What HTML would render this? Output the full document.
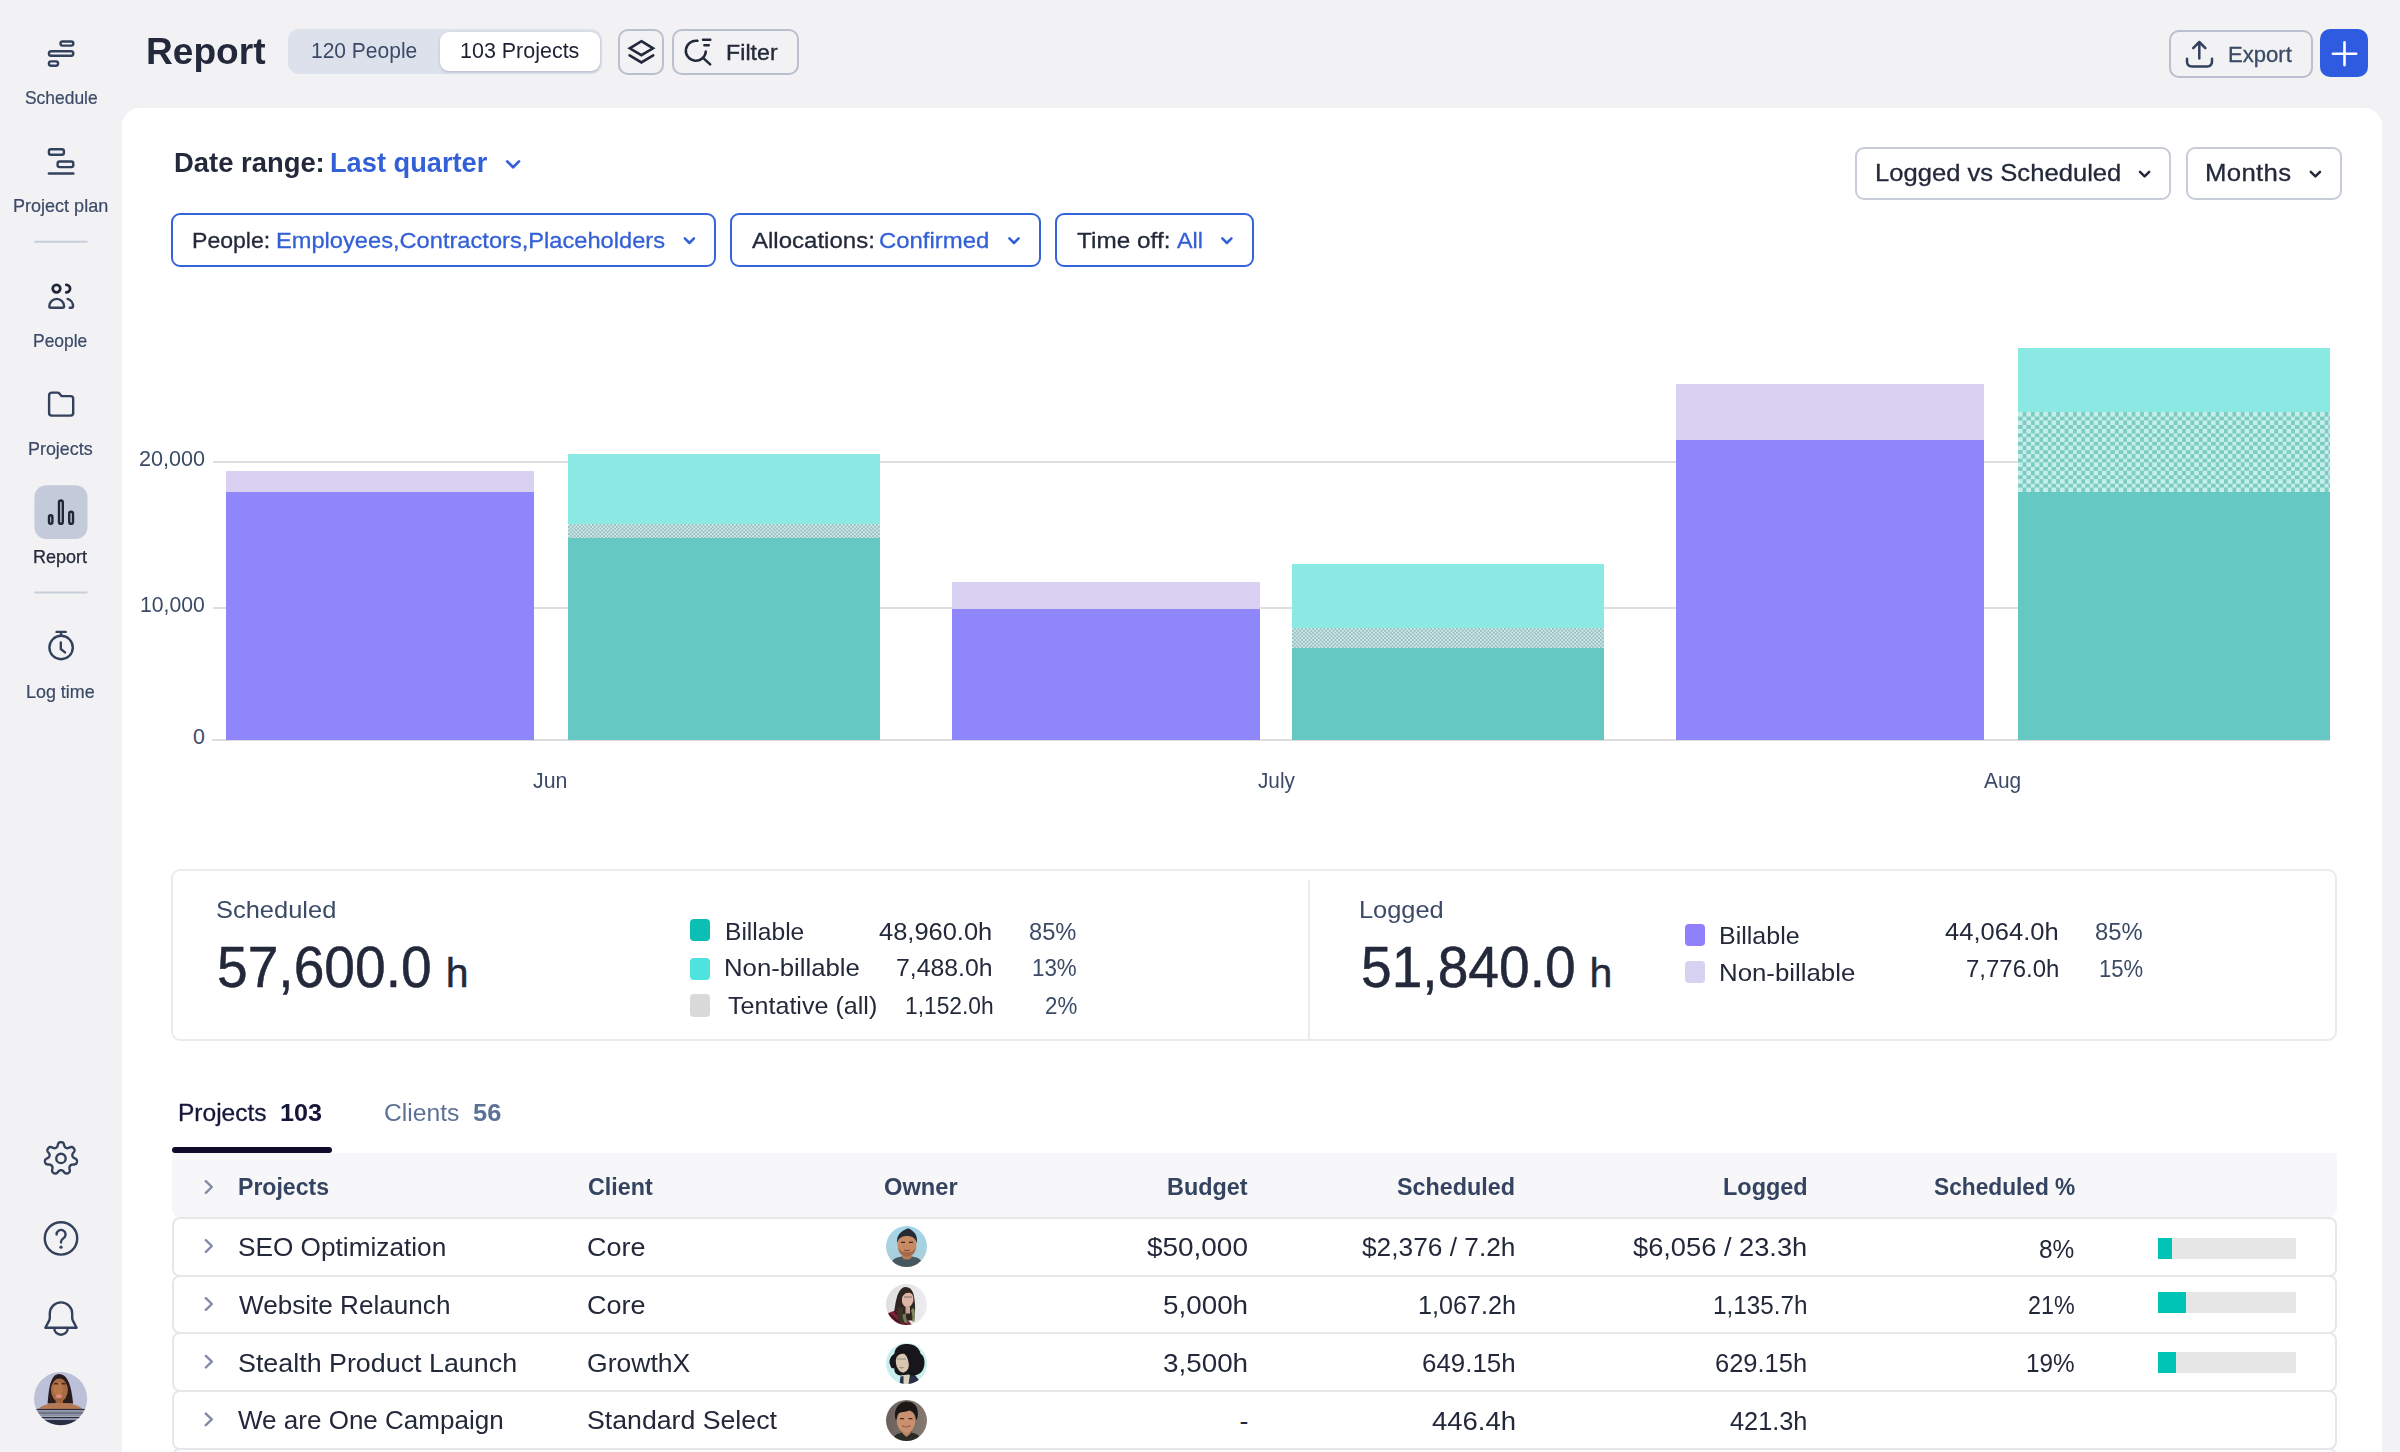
<!DOCTYPE html>
<html><head><meta charset="utf-8"><title>Report</title>
<style>
*{box-sizing:border-box;margin:0;padding:0}
html,body{width:2400px;height:1452px;overflow:hidden;background:#f2f2f5;font-family:"Liberation Sans",sans-serif}
body{position:relative}
.a{position:absolute}
.t{position:absolute;white-space:nowrap;display:block}
svg{position:absolute;overflow:visible}

</style></head>
<body>
<!-- panel -->
<div class="a" style="left:122px;top:108px;width:2260px;height:1400px;background:#fff;border-radius:18px 18px 0 0"></div>
<!-- sidebar icons -->
<svg width="122" height="1452" viewBox="0 0 122 1452" style="left:0;top:0" fill="none" stroke="#33415c" stroke-width="2.4" stroke-linecap="round" stroke-linejoin="round">
<rect x="60.5" y="41.5" width="12.8" height="4.1" rx="2.05"/>
<rect x="48.9" y="51.2" width="24.4" height="4.6" rx="2.3"/>
<rect x="48.9" y="61.4" width="9.2" height="4.4" rx="2.2"/>
<rect x="48.9" y="149.2" width="15" height="5.6" rx="2"/>
<rect x="57.6" y="161.5" width="15.7" height="5.6" rx="2"/>
<path d="M48.9 173.5H73.3"/>
<path d="M34.4 241.7H87.5M34.4 592.6H87.5" stroke="#c9cedb" stroke-width="2" stroke-linecap="butt"/>
<g stroke="#1f2637" stroke-width="2.7"><circle cx="56.5" cy="288.6" r="3.8"/><path d="M66.3 284.8a3.8 3.8 0 0 1 0 7.6"/></g>
<path d="M49.3 306.3a7.4 7.4 0 0 1 14.8 0q0 1.5-1.5 1.5h-11.8q-1.5 0-1.5-1.5z"/>
<path d="M67.6 298.9a7.4 7.4 0 0 1 5.4 7.4q0 1.5-1.6 1.5h-1.6"/>
<path d="M49.1 395.2a2.6 2.6 0 0 1 2.6-2.6h5.8q1.2 0 1.9 0.9l2 2.6h9.2a2.6 2.6 0 0 1 2.6 2.6v14.3a2.6 2.6 0 0 1-2.6 2.6h-18.9a2.6 2.6 0 0 1-2.6-2.6z"/>
<rect x="34.4" y="485.2" width="53.1" height="53.7" rx="12" fill="#c3cad9" stroke="none"/>
<g stroke="#1f2637"><rect x="49" y="515.2" width="3.4" height="8.6" rx="1.7"/><rect x="59" y="500.5" width="3.8" height="23.3" rx="1.9"/><rect x="69.2" y="511.7" width="3.8" height="12.1" rx="1.9"/></g>
<circle cx="61.1" cy="647.5" r="11.7"/><path d="M56.6 631.9H65.7M61.1 632v3.6M60.8 642.5v6.5l4.2 3.4"/>
<path d="M75.02 1158.45 L75.59 1158.78 L76.08 1159.13 L76.46 1159.49 L76.71 1159.87 L76.87 1160.24 L76.96 1160.62 L76.99 1160.99 L76.97 1161.35 L76.93 1161.72 L76.86 1162.08 L76.77 1162.43 L76.65 1162.78 L76.50 1163.11 L76.31 1163.44 L76.08 1163.74 L75.77 1164.00 L75.38 1164.23 L74.88 1164.39 L74.28 1164.50 L73.63 1164.55 L72.98 1164.57 L72.39 1164.60 L71.91 1164.66 L71.52 1164.75 L71.21 1164.89 L70.96 1165.04 L70.74 1165.22 L70.54 1165.41 L70.37 1165.60 L70.20 1165.81 L70.03 1166.02 L69.88 1166.24 L69.74 1166.47 L69.62 1166.72 L69.52 1167.00 L69.46 1167.33 L69.46 1167.73 L69.51 1168.22 L69.61 1168.80 L69.73 1169.43 L69.83 1170.08 L69.86 1170.69 L69.81 1171.21 L69.68 1171.64 L69.48 1172.00 L69.24 1172.30 L68.97 1172.55 L68.68 1172.77 L68.37 1172.97 L68.04 1173.14 L67.71 1173.28 L67.36 1173.41 L67.01 1173.50 L66.64 1173.55 L66.26 1173.56 L65.85 1173.48 L65.43 1173.32 L64.99 1173.03 L64.54 1172.63 L64.10 1172.15 L63.67 1171.65 L63.29 1171.22 L62.94 1170.87 L62.62 1170.63 L62.32 1170.47 L62.04 1170.37 L61.77 1170.31 L61.50 1170.27 L61.23 1170.26 L60.97 1170.25 L60.71 1170.26 L60.44 1170.27 L60.17 1170.31 L59.90 1170.37 L59.62 1170.47 L59.32 1170.63 L59.00 1170.87 L58.65 1171.22 L58.27 1171.65 L57.84 1172.15 L57.40 1172.63 L56.95 1173.03 L56.51 1173.32 L56.09 1173.48 L55.68 1173.56 L55.30 1173.55 L54.93 1173.50 L54.58 1173.41 L54.23 1173.28 L53.90 1173.14 L53.57 1172.97 L53.26 1172.77 L52.97 1172.55 L52.70 1172.30 L52.46 1172.00 L52.26 1171.64 L52.13 1171.21 L52.08 1170.69 L52.11 1170.08 L52.21 1169.43 L52.33 1168.80 L52.43 1168.22 L52.48 1167.73 L52.48 1167.33 L52.42 1167.00 L52.32 1166.72 L52.20 1166.47 L52.06 1166.24 L51.91 1166.02 L51.74 1165.81 L51.57 1165.60 L51.40 1165.41 L51.20 1165.22 L50.98 1165.04 L50.73 1164.89 L50.42 1164.75 L50.03 1164.66 L49.55 1164.60 L48.96 1164.57 L48.31 1164.55 L47.66 1164.50 L47.06 1164.39 L46.56 1164.23 L46.17 1164.00 L45.86 1163.74 L45.63 1163.44 L45.44 1163.11 L45.29 1162.78 L45.17 1162.43 L45.08 1162.08 L45.01 1161.72 L44.97 1161.35 L44.95 1160.99 L44.98 1160.62 L45.07 1160.24 L45.23 1159.87 L45.48 1159.49 L45.86 1159.13 L46.35 1158.78 L46.92 1158.45 L47.50 1158.15 L48.01 1157.87 L48.42 1157.60 L48.73 1157.35 L48.95 1157.10 L49.11 1156.84 L49.23 1156.59 L49.32 1156.34 L49.40 1156.08 L49.47 1155.82 L49.52 1155.56 L49.56 1155.30 L49.59 1155.03 L49.59 1154.75 L49.55 1154.45 L49.46 1154.13 L49.30 1153.77 L49.04 1153.35 L48.70 1152.88 L48.31 1152.35 L47.94 1151.81 L47.65 1151.28 L47.47 1150.79 L47.40 1150.34 L47.42 1149.94 L47.51 1149.56 L47.64 1149.22 L47.81 1148.89 L48.01 1148.58 L48.23 1148.29 L48.46 1148.01 L48.72 1147.75 L49.00 1147.51 L49.31 1147.30 L49.65 1147.13 L50.05 1147.02 L50.50 1146.99 L51.02 1147.06 L51.60 1147.22 L52.21 1147.47 L52.81 1147.73 L53.34 1147.95 L53.81 1148.11 L54.20 1148.19 L54.53 1148.21 L54.83 1148.18 L55.10 1148.11 L55.36 1148.03 L55.61 1147.93 L55.85 1147.82 L56.09 1147.70 L56.32 1147.57 L56.55 1147.42 L56.76 1147.25 L56.97 1147.03 L57.17 1146.76 L57.35 1146.40 L57.52 1145.94 L57.68 1145.38 L57.84 1144.75 L58.04 1144.12 L58.27 1143.57 L58.54 1143.12 L58.85 1142.78 L59.18 1142.55 L59.52 1142.38 L59.88 1142.27 L60.24 1142.20 L60.60 1142.16 L60.97 1142.15 L61.34 1142.16 L61.70 1142.20 L62.06 1142.27 L62.42 1142.38 L62.76 1142.55 L63.09 1142.78 L63.40 1143.12 L63.67 1143.57 L63.90 1144.12 L64.10 1144.75 L64.26 1145.38 L64.42 1145.94 L64.59 1146.40 L64.77 1146.76 L64.97 1147.03 L65.18 1147.25 L65.39 1147.42 L65.62 1147.57 L65.85 1147.70 L66.09 1147.82 L66.33 1147.93 L66.58 1148.03 L66.84 1148.11 L67.11 1148.18 L67.41 1148.21 L67.74 1148.19 L68.13 1148.11 L68.60 1147.95 L69.13 1147.73 L69.73 1147.47 L70.34 1147.22 L70.92 1147.06 L71.44 1146.99 L71.89 1147.02 L72.29 1147.13 L72.63 1147.30 L72.94 1147.51 L73.22 1147.75 L73.48 1148.01 L73.71 1148.29 L73.93 1148.58 L74.13 1148.89 L74.30 1149.22 L74.43 1149.56 L74.52 1149.94 L74.54 1150.34 L74.47 1150.79 L74.29 1151.28 L74.00 1151.81 L73.63 1152.35 L73.24 1152.88 L72.90 1153.35 L72.64 1153.77 L72.48 1154.13 L72.39 1154.45 L72.35 1154.75 L72.35 1155.03 L72.38 1155.30 L72.42 1155.56 L72.47 1155.82 L72.54 1156.08 L72.62 1156.34 L72.71 1156.59 L72.83 1156.84 L72.99 1157.10 L73.21 1157.35 L73.52 1157.60 L73.93 1157.87 L74.44 1158.15Z"/><circle cx="60.97" cy="1158.45" r="4.7"/>
<circle cx="61" cy="1238.400" r="16.200"/><path d="M56.600 1234.400a4.500 4.500 0 1 1 6.900 3.800c-1.700 1-2.500 1.900-2.500 3.600v0.600"/><circle cx="61" cy="1247.200" r="1.600" fill="#33415c" stroke="none"/>
<path d="M45.4 1327.8l3.6-6.9q0.8-1.500 0.800-3.200v-4.100a11.200 11.200 0 0 1 22.400 0v4.100q0 1.700 0.800 3.200l3.600 6.900z"/><path d="M54.3 1328.600a6.700 6.200 0 0 0 13.400 0"/>
</svg>

<!-- header -->
<div class="a" style="left:287.6px;top:28.8px;width:314px;height:45.5px;background:#dde1eb;border-radius:11px"></div>
<div class="a" style="left:440.3px;top:32px;width:159.5px;height:39px;background:#fff;border-radius:9px;box-shadow:0 1px 3px rgba(30,40,80,.22)"></div>
<div class="a" style="left:618.2px;top:29.2px;width:46.2px;height:45.8px;border:2px solid #b9bfce;border-radius:10px"></div>
<div class="a" style="left:671.5px;top:29.2px;width:127px;height:45.8px;border:2px solid #b9bfce;border-radius:10px"></div>
<div class="a" style="left:2169.2px;top:30.2px;width:143.9px;height:47.7px;border:2px solid #b9bfce;border-radius:10px"></div>
<div class="a" style="left:2320px;top:28.8px;width:48px;height:48.2px;background:#2f5be0;border-radius:10px"></div>
<svg width="2400" height="110" viewBox="0 0 2400 110" style="left:0;top:0" fill="none" stroke-linecap="round" stroke-linejoin="round">
<g stroke="#23293a" stroke-width="2.6" stroke-linejoin="miter">
<path d="M641.4 41.2L653 48.3L641.4 55.2L629.8 48.3Z"/><path d="M629.6 55.4L641.4 62.4L653.2 55.4"/>
</g>
<g stroke="#23293a" stroke-width="2.5">
<path d="M697.5 40.85A10 10 0 1 0 705.8 51.6"/><path d="M703.6 58.4L710.2 64.4M703 39.7H710.3M704.4 45.2H708.8"/>
</g>
<g stroke="#33415c" stroke-width="2.5">
<path d="M2199.3 58.6V42.2M2193.2 48.2L2199.3 42L2205.4 48.2"/><path d="M2187 58.8V61.6Q2187 66.5 2191.9 66.5H2207.1Q2212 66.5 2212 61.6V58.8"/>
</g>
<path d="M2332.9 53.7H2356.2M2344.5 42.2V65.1" stroke="#fff" stroke-width="2.6"/>
</svg>
<!-- panel top controls -->
<div class="a" style="left:1855px;top:146.8px;width:316px;height:53.2px;border:2px solid #c8ccd9;border-radius:9px"></div>
<div class="a" style="left:2185.5px;top:146.8px;width:156.5px;height:53.2px;border:2px solid #c8ccd9;border-radius:9px"></div>
<div class="a" style="left:171.3px;top:213.4px;width:544.6px;height:53.2px;border:2px solid #3563d9;border-radius:9px"></div>
<div class="a" style="left:730px;top:213.4px;width:310.8px;height:53.2px;border:2px solid #3563d9;border-radius:9px"></div>
<div class="a" style="left:1054.6px;top:213.4px;width:199.3px;height:53.2px;border:2px solid #3563d9;border-radius:9px"></div>
<svg width="2400" height="180" viewBox="0 120 2400 180" style="left:0;top:120px" fill="none" stroke-linecap="round" stroke-linejoin="round" stroke-width="2.5">
<g stroke="#3360d6">
<path d="M507.2 161.4l5.9 5.9l5.9-5.9" stroke-width="2.7"/>
<path d="M684.8 238.4l4.6 4.6l4.6-4.6"/><path d="M1009.4 238.4l4.6 4.6l4.6-4.6"/><path d="M1222.3 238.4l4.6 4.6l4.6-4.6"/>
</g>
<g stroke="#23293a"><path d="M2140 171.8l4.6 4.6l4.6-4.6"/><path d="M2310.8 171.8l4.6 4.6l4.6-4.6"/></g>
</svg>

<!-- chart -->
<div class="a" style="left:212.5px;top:461.2px;width:2117.5px;height:1.7px;background:#dedee2"></div>
<div class="a" style="left:212.5px;top:607.1px;width:2117.5px;height:1.7px;background:#dedee2"></div>
<div class="a" style="left:212px;top:739.1px;width:2118px;height:1.8px;background:#dcdce1"></div>
<div class="a" style="left:226px;top:471px;width:308px;height:21px;background:#d8d1f2"></div>
<div class="a" style="left:226px;top:492px;width:308px;height:248px;background:#8f86fb"></div>
<div class="a" style="left:568px;top:454px;width:312px;height:70px;background:#8be9e3"></div>
<div class="a" style="left:568px;top:524px;width:312px;height:14px;background:conic-gradient(#9db8bc 25%,#c9f0ee 0 50%,#9db8bc 0 75%,#c9f0ee 0) 0 0/3.7px 3.7px"></div>
<div class="a" style="left:568px;top:538px;width:312px;height:202px;background:#65c8c2"></div>
<div class="a" style="left:952px;top:582px;width:308px;height:27px;background:#d8d1f2"></div>
<div class="a" style="left:952px;top:609px;width:308px;height:131px;background:#8f86fb"></div>
<div class="a" style="left:1292px;top:564px;width:312px;height:64px;background:#8be9e3"></div>
<div class="a" style="left:1292px;top:628px;width:312px;height:20px;background:conic-gradient(#9db8bc 25%,#c9f0ee 0 50%,#9db8bc 0 75%,#c9f0ee 0) 0 0/3.7px 3.7px"></div>
<div class="a" style="left:1292px;top:648px;width:312px;height:92px;background:#65c8c2"></div>
<div class="a" style="left:1676px;top:384px;width:307.5px;height:56px;background:#d8d1f2"></div>
<div class="a" style="left:1676px;top:440px;width:307.5px;height:300px;background:#8f86fb"></div>
<div class="a" style="left:2018px;top:348px;width:312px;height:64px;background:#8be9e3"></div>
<div class="a" style="left:2018px;top:412px;width:312px;height:80px;background:conic-gradient(#7ecbc1 25%,#c4efeb 0 50%,#7ecbc1 0 75%,#c4efeb 0) 0 0/8.4px 8.4px"></div>
<div class="a" style="left:2018px;top:492px;width:312px;height:248px;background:#65c8c2"></div>

<!-- summary -->
<div class="a" style="left:171px;top:869px;width:2166px;height:172px;border:2px solid #ebebee;border-radius:9px"></div>
<div class="a" style="left:1308.3px;top:880px;width:2px;height:160px;background:#ebebee"></div>
<div class="a" style="left:689.7px;top:918.6px;width:20.5px;height:22.8px;border-radius:4px;background:#0bbfb5"></div>
<div class="a" style="left:689.7px;top:957.8px;width:20.5px;height:22.6px;border-radius:4px;background:#4ee3dc"></div>
<div class="a" style="left:689.7px;top:994.2px;width:20.5px;height:22.7px;border-radius:4px;background:#d9d9d9"></div>
<div class="a" style="left:1685px;top:924.4px;width:20.2px;height:21.6px;border-radius:4px;background:#9180fb"></div>
<div class="a" style="left:1685px;top:961.4px;width:20.2px;height:21.6px;border-radius:4px;background:#d8d1f2"></div>
<!-- tabs & table -->
<div class="a" style="left:171.6px;top:1147.3px;width:160.4px;height:5.5px;background:#0d0a2b;border-radius:3px"></div>
<div class="a" style="left:172px;top:1153px;width:2165px;height:65px;background:#f7f7fa;border-radius:3px 3px 9px 9px"></div>
<div class="a" style="left:172px;top:1217px;width:2165px;height:59.5px;border:2px solid #e7e7ea;border-radius:8px;background:#fff"></div>
<div class="a" style="left:172px;top:1274.7px;width:2165px;height:59.5px;border:2px solid #e7e7ea;border-radius:8px;background:#fff"></div>
<div class="a" style="left:172px;top:1332.4px;width:2165px;height:59.5px;border:2px solid #e7e7ea;border-radius:8px;background:#fff"></div>
<div class="a" style="left:172px;top:1390.1px;width:2165px;height:59.5px;border:2px solid #e7e7ea;border-radius:8px;background:#fff"></div>
<div class="a" style="left:172px;top:1447.8px;width:2165px;height:59.5px;border:2px solid #e7e7ea;border-radius:8px;background:#fff"></div>
<svg width="60" height="300" viewBox="180 1160 60 300" style="left:180px;top:1160px" fill="none" stroke="#828aa6" stroke-width="2.4" stroke-linecap="round" stroke-linejoin="round"><path d="M205.8 1181.2l6 5.8l-6 5.8M205.8 1240.2l6 5.8l-6 5.8M205.8 1298.2l6 5.8l-6 5.8M205.8 1355.9l6 5.8l-6 5.8M205.8 1413.6l6 5.8l-6 5.8"/></svg>
<div class="a" style="left:2158px;top:1238px;width:138px;height:20.7px;background:#e6e6e7"></div>
<div class="a" style="left:2158px;top:1238px;width:14px;height:20.7px;background:#00c5b6"></div>
<div class="a" style="left:2158px;top:1292px;width:138px;height:20.7px;background:#e6e6e7"></div>
<div class="a" style="left:2158px;top:1292px;width:28px;height:20.7px;background:#00c5b6"></div>
<div class="a" style="left:2158px;top:1352px;width:138px;height:20.7px;background:#e6e6e7"></div>
<div class="a" style="left:2158px;top:1352px;width:18px;height:20.7px;background:#00c5b6"></div>

<!-- avatars -->
<svg width="53.2" height="53.2" viewBox="-26.6 -26.6 53.2 53.2" style="left:34.4px;top:1372px"><defs><filter id="bl" x="-10%" y="-10%" width="120%" height="120%"><feGaussianBlur stdDeviation="0.55"/></filter><clipPath id="cs"><circle cx="0" cy="0" r="26.6"/></clipPath></defs><g clip-path="url(#cs)"><g filter="url(#bl)"><rect x="-27" y="-27" width="54" height="54" fill="#bcc0d8"/>
<path d="M-13 5C-12-8-10.500-24.500-1.500-24.500C8-24.500 11-10 12.500 5Z" fill="#2a1b1d"/>
<ellipse cx="-1.200" cy="-8.500" rx="8.500" ry="11.500" fill="#a86a42"/>
<ellipse cx="-2.500" cy="-10" rx="5" ry="7" fill="#bd7d4e" opacity=".7"/>
<path d="M-6.500-14.500q2-1.200 4 0M1-14.500q2-1.200 4 0" stroke="#4a2a1c" stroke-width="1.300" fill="none"/>
<ellipse cx="-1.600" cy="-2.400" rx="3.200" ry="1.900" fill="#e58680"/>
<path d="M-5 0h7.500v8h-7.500z" fill="#9c6240"/>
<path d="M-23 12C-20 6-10 4.500-1 4.500C9 4.500 19 6 23 12V14H-23Z" fill="#b57a55"/>
<rect x="-27" y="10.300" width="54" height="20" fill="#2c2d44"/>
<rect x="-27" y="11.400" width="54" height="5.800" fill="#8f95a6"/>
<rect x="-27" y="13.800" width="54" height="1.300" fill="#5d6478"/>
<rect x="-27" y="19.600" width="54" height="1.800" fill="#9aa0b4"/>
<rect x="-27" y="17.200" width="54" height="1" fill="#c5c9d3"/></g></g></svg>
<svg width="41" height="41" viewBox="-20.5 -20.5 41 41" style="left:886.1px;top:1226.1px"><defs><clipPath id="c1"><circle cx="0" cy="0" r="20.5"/></clipPath></defs><g clip-path="url(#c1)"><g filter="url(#bl)"><defs><linearGradient id="g1" x1="0" y1="0" x2="0" y2="1"><stop offset="0" stop-color="#a6d6e9"/><stop offset="1" stop-color="#a9cdd6"/></linearGradient></defs>
<rect x="-21" y="-21" width="42" height="42" fill="url(#g1)"/>
<path d="M-17 21C-16 12-9 10.500-4 10H5C10 10.500 16 12 17 21Z" fill="#47595e"/>
<path d="M-4 6h9v5.500q-4.500 3-9 0z" fill="#b97b58"/>
<ellipse cx="0.500" cy="-1.500" rx="9.500" ry="11.200" fill="#c88a64"/>
<path d="M-8.500 1C-8 8-3 10 0.500 10C4 10 9 8 9.500 1C7 5 4 5.500 0.500 5.500C-3 5.500-6 5-8.500 1Z" fill="#9a5f45" opacity=".75"/>
<path d="M-9.300-3C-10.500-11-6-15 1.500-18.200C8-15.500 11.500-11 10.300-3C9.500-8 6-10.500 0.500-10.500C-5-10.500-8.500-8-9.300-3Z" fill="#272a33"/>
<path d="M-5.500-4.200h4M2.500-4.200h4" stroke="#3a2a22" stroke-width="1.300"/>
<path d="M-2.500 3.500q3 1.300 6 0" stroke="#7a3f30" stroke-width="1" fill="none"/></g></g></svg>
<svg width="41" height="41" viewBox="-20.5 -20.5 41 41" style="left:886.1px;top:1283.9px"><defs><clipPath id="c2"><circle cx="0" cy="0" r="20.5"/></clipPath></defs><g clip-path="url(#c2)"><g filter="url(#bl)"><defs><linearGradient id="g2" x1="0" y1="0" x2="1" y2="0"><stop offset="0" stop-color="#dedede"/><stop offset="1" stop-color="#ececf1"/></linearGradient></defs>
<rect x="-21" y="-21" width="42" height="42" fill="url(#g2)"/>
<path d="M-13 12C-11 0-10-17-1-17.500C7-17.500 8-8 8.500 0C9 6 8 12 7 16H-13Z" fill="#2e2521"/>
<ellipse cx="1.200" cy="-5" rx="5.800" ry="7.600" fill="#dcb6a6" transform="rotate(8 1.200 -5)"/>
<path d="M-4-11C-2-15 4-15.500 6.500-10C3-12.500-1-12.500-4-8Z" fill="#2e2521"/>
<path d="M-2.500-7.500h8" stroke="#6a5a58" stroke-width=".8"/>
<path d="M-1 2h4.500v7h-4.500z" fill="#c9a494"/>
<path d="M4.500 6C5.500 9 6.500 12 5.500 17H8C9 11 8.500 6 7 3Z" fill="#7f8c5c"/>
<path d="M-20 10C-15 6-10 5.500-6 7L6 21H-20Z" fill="#7d2234"/>
<path d="M-18 9l14 12M-12 6.500l12 14" stroke="#3b1620" stroke-width="1.800"/>
<path d="M-9 3C-10 9-9 14-7 18L-2 17C-4 12-4 7-3 3Z" fill="#3a302a"/>
<path d="M-4 10C-4 13-3 16-1.500 19L1 18C-0.500 14-0.500 12-0.500 9Z" fill="#6f7a50"/></g></g></svg>
<svg width="41" height="41" viewBox="-20.5 -20.5 41 41" style="left:886.1px;top:1342.7px"><defs><clipPath id="c3"><circle cx="0" cy="0" r="20.5"/></clipPath></defs><g clip-path="url(#c3)"><g filter="url(#bl)"><rect x="-21" y="-21" width="42" height="42" fill="#c8efef"/>
<path d="M-7 21L-6 13L8 11L16 21Z" fill="#2a2f48"/>
<path d="M-3 8L4 7L2 21H-3Z" fill="#d8d3b8"/>
<path d="M-16 2C-19-3-15-8-12-10C-12-16-6-20 0-19.500C7-20 13-16 14-10C19-7 19 2 16 7C13 12 6 13 2 11L-6 12C-10 12-13 8-12 5C-15 5-16 4-16 2Z" fill="#18181c"/>
<ellipse cx="-4" cy="-1" rx="6.600" ry="10" fill="#d9c6b1" transform="rotate(-8 -4 -1)"/>
<path d="M-10-9C-7-14-1-14 3-10C4-5 4 0 2.500 4C2.500-2 1-7-2-9.500C-5-10-8-9.500-10-6Z" fill="#18181c"/>
<path d="M-9.500-4.500h9" stroke="#7f8a8a" stroke-width=".9"/>
<path d="M-7 4q2 .8 4 0" stroke="#8a6a5c" stroke-width=".9" fill="none"/></g></g></svg>
<svg width="41" height="41" viewBox="-20.5 -20.5 41 41" style="left:886.1px;top:1399.8px"><defs><clipPath id="c4"><circle cx="0" cy="0" r="20.5"/></clipPath></defs><g clip-path="url(#c4)"><g filter="url(#bl)"><defs><linearGradient id="g4" x1="0" y1="0" x2="1" y2="0"><stop offset="0" stop-color="#6a615b"/><stop offset="1" stop-color="#857a70"/></linearGradient></defs>
<rect x="-21" y="-21" width="42" height="42" fill="url(#g4)"/>
<path d="M-15 21C-13 14-8 12.500-3 12H4C9 12.500 13 14 15 21Z" fill="#2b2927"/>
<path d="M-4 8h8v5l-4 3.500l-4-3.500z" fill="#b98264"/>
<ellipse cx="-0.500" cy="0.500" rx="9.300" ry="11.500" fill="#c9916f"/>
<path d="M-10.500 0C-14-10-8-19 0-19C8-19 13-13 11-3C10-1 9.500 0 9.500 0C9.500-6 7-9 3-10C-1-8-6-9-8-7C-9.500-5-9.500-2-10.500 0Z" fill="#1a1918"/>
<path d="M-6.500-1.500q2-1 4 0M2-1.500q2-1 4 0" stroke="#2a1a14" stroke-width="1.200" fill="none"/>
<path d="M-4.500 5.500q4 3 8.500 0q-4.200 1-8.500 0z" fill="#f1e4dc" stroke="#8a4a3a" stroke-width=".7"/></g></g></svg>


<div id="texts">
<span class="t" style="left:24.75px;top:90.00px;font-size:17.8px;line-height:17.8px;color:#3b4a66;transform:scaleX(0.9797);transform-origin:0 0;-webkit-text-stroke:0.2px #3b4a66;">Schedule</span>
<span class="t" style="left:13.49px;top:198.00px;font-size:17.8px;line-height:17.8px;color:#3b4a66;transform:scaleX(1.0140);transform-origin:0 0;-webkit-text-stroke:0.2px #3b4a66;">Project plan</span>
<span class="t" style="left:33.42px;top:333.00px;font-size:17.8px;line-height:17.8px;color:#3b4a66;transform:scaleX(0.9802);transform-origin:0 0;-webkit-text-stroke:0.2px #3b4a66;">People</span>
<span class="t" style="left:28.29px;top:441.00px;font-size:17.8px;line-height:17.8px;color:#3b4a66;transform:scaleX(1.0057);transform-origin:0 0;-webkit-text-stroke:0.2px #3b4a66;">Projects</span>
<span class="t" style="left:33.39px;top:549.00px;font-size:17.8px;line-height:17.8px;color:#23293a;transform:scaleX(1.0128);transform-origin:0 0;-webkit-text-stroke:0.25px #23293a;">Report</span>
<span class="t" style="left:26.19px;top:684.00px;font-size:17.8px;line-height:17.8px;color:#3b4a66;transform:scaleX(1.0073);transform-origin:0 0;-webkit-text-stroke:0.2px #3b4a66;">Log time</span>
<span class="t" style="left:145.82px;top:33.00px;font-size:37.5px;line-height:37.5px;color:#23293a;font-weight:700;transform:scaleX(0.9896);transform-origin:0 0;">Report</span>
<span class="t" style="left:310.62px;top:41.00px;font-size:21.5px;line-height:21.5px;color:#3b4a66;transform:scaleX(0.9763);transform-origin:0 0;">120 People</span>
<span class="t" style="left:460.20px;top:41.00px;font-size:21.5px;line-height:21.5px;color:#1c2030;transform:scaleX(0.9986);transform-origin:0 0;">103 Projects</span>
<span class="t" style="left:725.94px;top:42.00px;font-size:21.8px;line-height:21.8px;color:#23293a;letter-spacing:0.074px;transform:scaleX(1.0600);transform-origin:0 0;-webkit-text-stroke:0.35px #23293a;">Filter</span>
<span class="t" style="left:2227.78px;top:44.00px;font-size:21.6px;line-height:21.6px;color:#3b4a66;transform:scaleX(1.0226);transform-origin:0 0;-webkit-text-stroke:0.3px #3b4a66;">Export</span>
<span class="t" style="left:174.13px;top:148.00px;font-size:28.4px;line-height:28.4px;color:#23293a;font-weight:700;transform:scaleX(0.9651);transform-origin:0 0;">Date range:</span>
<span class="t" style="left:329.79px;top:148.00px;font-size:28.4px;line-height:28.4px;color:#3360d6;font-weight:700;transform:scaleX(0.9584);transform-origin:0 0;">Last quarter</span>
<span class="t" style="left:1874.59px;top:161.00px;font-size:24.3px;line-height:24.3px;color:#23293a;transform:scaleX(1.0539);transform-origin:0 0;-webkit-text-stroke:0.3px #23293a;">Logged vs Scheduled</span>
<span class="t" style="left:2204.88px;top:161.00px;font-size:24.3px;line-height:24.3px;color:#23293a;letter-spacing:0.306px;transform:scaleX(1.0600);transform-origin:0 0;-webkit-text-stroke:0.3px #23293a;">Months</span>
<span class="t" style="left:192.39px;top:229.00px;font-size:22.9px;line-height:22.9px;color:#23293a;transform:scaleX(1.0076);transform-origin:0 0;-webkit-text-stroke:0.3px #23293a;">People:</span>
<span class="t" style="left:275.97px;top:229.00px;font-size:22.9px;line-height:22.9px;color:#3360d6;transform:scaleX(1.0329);transform-origin:0 0;-webkit-text-stroke:0.3px #3360d6;">Employees,Contractors,Placeholders</span>
<span class="t" style="left:751.80px;top:229.00px;font-size:22.9px;line-height:22.9px;color:#23293a;transform:scaleX(1.0493);transform-origin:0 0;-webkit-text-stroke:0.3px #23293a;">Allocations:</span>
<span class="t" style="left:879.16px;top:229.00px;font-size:22.9px;line-height:22.9px;color:#3360d6;transform:scaleX(1.0447);transform-origin:0 0;-webkit-text-stroke:0.3px #3360d6;">Confirmed</span>
<span class="t" style="left:1077.00px;top:229.00px;font-size:22.9px;line-height:22.9px;color:#23293a;letter-spacing:0.047px;transform:scaleX(1.0600);transform-origin:0 0;-webkit-text-stroke:0.3px #23293a;">Time off:</span>
<span class="t" style="left:1176.50px;top:229.00px;font-size:22.9px;line-height:22.9px;color:#3360d6;transform:scaleX(1.0183);transform-origin:0 0;-webkit-text-stroke:0.3px #3360d6;">All</span>
<span class="t" style="left:138.74px;top:449.00px;font-size:21.3px;line-height:21.3px;color:#3b4a66;transform:scaleX(1.0149);transform-origin:0 0;">20,000</span>
<span class="t" style="left:140.00px;top:595.00px;font-size:21.3px;line-height:21.3px;color:#3b4a66;transform:scaleX(0.9954);transform-origin:0 0;">10,000</span>
<span class="t" style="left:193.00px;top:727.00px;font-size:21.3px;line-height:21.3px;color:#3b4a66;">0</span>
<span class="t" style="left:533.00px;top:771.00px;font-size:21.3px;line-height:21.3px;color:#3b4a66;transform:scaleX(1.0002);transform-origin:0 0;">Jun</span>
<span class="t" style="left:1258.40px;top:771.00px;font-size:21.3px;line-height:21.3px;color:#3b4a66;transform:scaleX(0.9732);transform-origin:0 0;">July</span>
<span class="t" style="left:1984.30px;top:771.00px;font-size:21.3px;line-height:21.3px;color:#3b4a66;transform:scaleX(0.9798);transform-origin:0 0;">Aug</span>
<span class="t" style="left:215.64px;top:898.00px;font-size:24px;line-height:24px;color:#3b4a66;letter-spacing:0.007px;transform:scaleX(1.0600);transform-origin:0 0;">Scheduled</span>
<span class="t" style="left:216.89px;top:939.00px;font-size:57.6px;line-height:57.6px;color:#23293a;transform:scaleX(0.9575);transform-origin:0 0;-webkit-text-stroke:0.5px #23293a;">57,600.0</span>
<span class="t" style="left:445.70px;top:953.00px;font-size:41px;line-height:41px;color:#23293a;-webkit-text-stroke:0.4px #23293a;">h</span>
<span class="t" style="left:724.58px;top:920.00px;font-size:24.4px;line-height:24.4px;color:#23293a;transform:scaleX(1.0082);transform-origin:0 0;">Billable</span>
<span class="t" style="left:879.00px;top:920.00px;font-size:24.4px;line-height:24.4px;color:#23293a;transform:scaleX(1.0436);transform-origin:0 0;">48,960.0h</span>
<span class="t" style="left:1029.23px;top:920.00px;font-size:24.4px;line-height:24.4px;color:#3b4a66;transform:scaleX(0.9718);transform-origin:0 0;">85%</span>
<span class="t" style="left:724.49px;top:956.00px;font-size:24.4px;line-height:24.4px;color:#23293a;transform:scaleX(1.0544);transform-origin:0 0;">Non-billable</span>
<span class="t" style="left:895.98px;top:956.00px;font-size:24.4px;line-height:24.4px;color:#23293a;transform:scaleX(1.0165);transform-origin:0 0;">7,488.0h</span>
<span class="t" style="left:1031.88px;top:956.00px;font-size:24.4px;line-height:24.4px;color:#3b4a66;transform:scaleX(0.9166);transform-origin:0 0;">13%</span>
<span class="t" style="left:727.50px;top:994.00px;font-size:24.4px;line-height:24.4px;color:#23293a;transform:scaleX(1.0290);transform-origin:0 0;">Tentative (all)</span>
<span class="t" style="left:904.57px;top:994.00px;font-size:24.4px;line-height:24.4px;color:#23293a;transform:scaleX(0.9342);transform-origin:0 0;">1,152.0h</span>
<span class="t" style="left:1044.69px;top:994.00px;font-size:24.4px;line-height:24.4px;color:#3b4a66;transform:scaleX(0.9146);transform-origin:0 0;">2%</span>
<span class="t" style="left:1359.44px;top:898.00px;font-size:24px;line-height:24px;color:#3b4a66;transform:scaleX(1.0580);transform-origin:0 0;">Logged</span>
<span class="t" style="left:1360.69px;top:939.00px;font-size:57.6px;line-height:57.6px;color:#23293a;transform:scaleX(0.9575);transform-origin:0 0;-webkit-text-stroke:0.5px #23293a;">51,840.0</span>
<span class="t" style="left:1589.50px;top:953.00px;font-size:41px;line-height:41px;color:#23293a;-webkit-text-stroke:0.4px #23293a;">h</span>
<span class="t" style="left:1719.35px;top:924.00px;font-size:24.4px;line-height:24.4px;color:#23293a;transform:scaleX(1.0253);transform-origin:0 0;">Billable</span>
<span class="t" style="left:1719.28px;top:961.00px;font-size:24.4px;line-height:24.4px;color:#23293a;transform:scaleX(1.0583);transform-origin:0 0;">Non-billable</span>
<span class="t" style="left:1945.40px;top:920.00px;font-size:24.4px;line-height:24.4px;color:#23293a;transform:scaleX(1.0473);transform-origin:0 0;">44,064.0h</span>
<span class="t" style="left:1965.62px;top:957.00px;font-size:24.4px;line-height:24.4px;color:#23293a;transform:scaleX(0.9829);transform-origin:0 0;">7,776.0h</span>
<span class="t" style="left:2095.02px;top:920.00px;font-size:24.4px;line-height:24.4px;color:#3b4a66;transform:scaleX(0.9760);transform-origin:0 0;">85%</span>
<span class="t" style="left:2098.50px;top:957.00px;font-size:24.4px;line-height:24.4px;color:#3b4a66;transform:scaleX(0.9039);transform-origin:0 0;">15%</span>
<span class="t" style="left:178.49px;top:1101.00px;font-size:24.2px;line-height:24.2px;color:#14163a;transform:scaleX(1.0142);transform-origin:0 0;-webkit-text-stroke:0.3px #14163a;">Projects</span>
<span class="t" style="left:280.16px;top:1101.00px;font-size:24.2px;line-height:24.2px;color:#14163a;font-weight:700;transform:scaleX(1.0410);transform-origin:0 0;">103</span>
<span class="t" style="left:383.68px;top:1101.00px;font-size:24.2px;line-height:24.2px;color:#5b7196;transform:scaleX(1.0201);transform-origin:0 0;">Clients</span>
<span class="t" style="left:473.20px;top:1101.00px;font-size:24.2px;line-height:24.2px;color:#5b7196;font-weight:700;transform:scaleX(1.0510);transform-origin:0 0;">56</span>
<span class="t" style="left:237.77px;top:1176.00px;font-size:23.5px;line-height:23.5px;color:#34435f;font-weight:700;transform:scaleX(0.9818);transform-origin:0 0;">Projects</span>
<span class="t" style="left:588.20px;top:1176.00px;font-size:23.5px;line-height:23.5px;color:#34435f;font-weight:700;transform:scaleX(0.9900);transform-origin:0 0;">Client</span>
<span class="t" style="left:884.00px;top:1176.00px;font-size:23.5px;line-height:23.5px;color:#34435f;font-weight:700;transform:scaleX(1.0071);transform-origin:0 0;">Owner</span>
<span class="t" style="left:1166.70px;top:1176.00px;font-size:23.5px;line-height:23.5px;color:#34435f;font-weight:700;transform:scaleX(0.9962);transform-origin:0 0;">Budget</span>
<span class="t" style="left:1397.30px;top:1176.00px;font-size:23.5px;line-height:23.5px;color:#34435f;font-weight:700;transform:scaleX(0.9934);transform-origin:0 0;">Scheduled</span>
<span class="t" style="left:1723.40px;top:1176.00px;font-size:23.5px;line-height:23.5px;color:#34435f;font-weight:700;transform:scaleX(0.9977);transform-origin:0 0;">Logged</span>
<span class="t" style="left:1933.60px;top:1176.00px;font-size:23.5px;line-height:23.5px;color:#34435f;font-weight:700;transform:scaleX(0.9661);transform-origin:0 0;">Scheduled %</span>
<span class="t" style="left:238.11px;top:1234.00px;font-size:26.6px;line-height:26.6px;color:#23293a;transform:scaleX(0.9854);transform-origin:0 0;">SEO Optimization</span>
<span class="t" style="left:238.75px;top:1292.00px;font-size:26.6px;line-height:26.6px;color:#23293a;transform:scaleX(0.9819);transform-origin:0 0;">Website Relaunch</span>
<span class="t" style="left:237.99px;top:1350.00px;font-size:26.6px;line-height:26.6px;color:#23293a;transform:scaleX(1.0094);transform-origin:0 0;">Stealth Product Launch</span>
<span class="t" style="left:238.30px;top:1407.00px;font-size:26.6px;line-height:26.6px;color:#23293a;transform:scaleX(0.9786);transform-origin:0 0;">We are One Campaign</span>
<span class="t" style="left:587.19px;top:1234.00px;font-size:26.6px;line-height:26.6px;color:#23293a;transform:scaleX(1.0134);transform-origin:0 0;">Core</span>
<span class="t" style="left:587.19px;top:1292.00px;font-size:26.6px;line-height:26.6px;color:#23293a;transform:scaleX(1.0134);transform-origin:0 0;">Core</span>
<span class="t" style="left:587.20px;top:1350.00px;font-size:26.6px;line-height:26.6px;color:#23293a;transform:scaleX(0.9979);transform-origin:0 0;">GrowthX</span>
<span class="t" style="left:587.20px;top:1407.00px;font-size:26.6px;line-height:26.6px;color:#23293a;transform:scaleX(1.0035);transform-origin:0 0;">Standard Select</span>
<span class="t" style="left:1147.40px;top:1234.00px;font-size:26.6px;line-height:26.6px;color:#23293a;transform:scaleX(1.0499);transform-origin:0 0;">$50,000</span>
<span class="t" style="left:1163.25px;top:1292.00px;font-size:26.6px;line-height:26.6px;color:#23293a;transform:scaleX(1.0459);transform-origin:0 0;">5,000h</span>
<span class="t" style="left:1163.25px;top:1350.00px;font-size:26.6px;line-height:26.6px;color:#23293a;transform:scaleX(1.0459);transform-origin:0 0;">3,500h</span>
<span class="t" style="left:1239.50px;top:1408.00px;font-size:26.6px;line-height:26.6px;color:#23293a;">-</span>
<span class="t" style="left:1361.90px;top:1234.00px;font-size:26.6px;line-height:26.6px;color:#23293a;transform:scaleX(0.9885);transform-origin:0 0;">$2,376 / 7.2h</span>
<span class="t" style="left:1417.91px;top:1292.00px;font-size:26.6px;line-height:26.6px;color:#23293a;transform:scaleX(0.9471);transform-origin:0 0;">1,067.2h</span>
<span class="t" style="left:1422.33px;top:1350.00px;font-size:26.6px;line-height:26.6px;color:#23293a;transform:scaleX(0.9741);transform-origin:0 0;">649.15h</span>
<span class="t" style="left:1432.00px;top:1408.00px;font-size:26.6px;line-height:26.6px;color:#23293a;transform:scaleX(1.0329);transform-origin:0 0;">446.4h</span>
<span class="t" style="left:1633.30px;top:1234.00px;font-size:26.6px;line-height:26.6px;color:#23293a;transform:scaleX(1.0244);transform-origin:0 0;">$6,056 / 23.3h</span>
<span class="t" style="left:1712.58px;top:1292.00px;font-size:26.6px;line-height:26.6px;color:#23293a;transform:scaleX(0.9124);transform-origin:0 0;">1,135.7h</span>
<span class="t" style="left:1714.94px;top:1350.00px;font-size:26.6px;line-height:26.6px;color:#23293a;transform:scaleX(0.9582);transform-origin:0 0;">629.15h</span>
<span class="t" style="left:1729.60px;top:1408.00px;font-size:26.6px;line-height:26.6px;color:#23293a;transform:scaleX(0.9522);transform-origin:0 0;">421.3h</span>
<span class="t" style="left:2038.98px;top:1236.00px;font-size:26.6px;line-height:26.6px;color:#23293a;transform:scaleX(0.9187);transform-origin:0 0;">8%</span>
<span class="t" style="left:2027.92px;top:1292.00px;font-size:26.6px;line-height:26.6px;color:#23293a;transform:scaleX(0.8763);transform-origin:0 0;">21%</span>
<span class="t" style="left:2025.97px;top:1350.00px;font-size:26.6px;line-height:26.6px;color:#23293a;transform:scaleX(0.9134);transform-origin:0 0;">19%</span>
</div>
</body></html>
